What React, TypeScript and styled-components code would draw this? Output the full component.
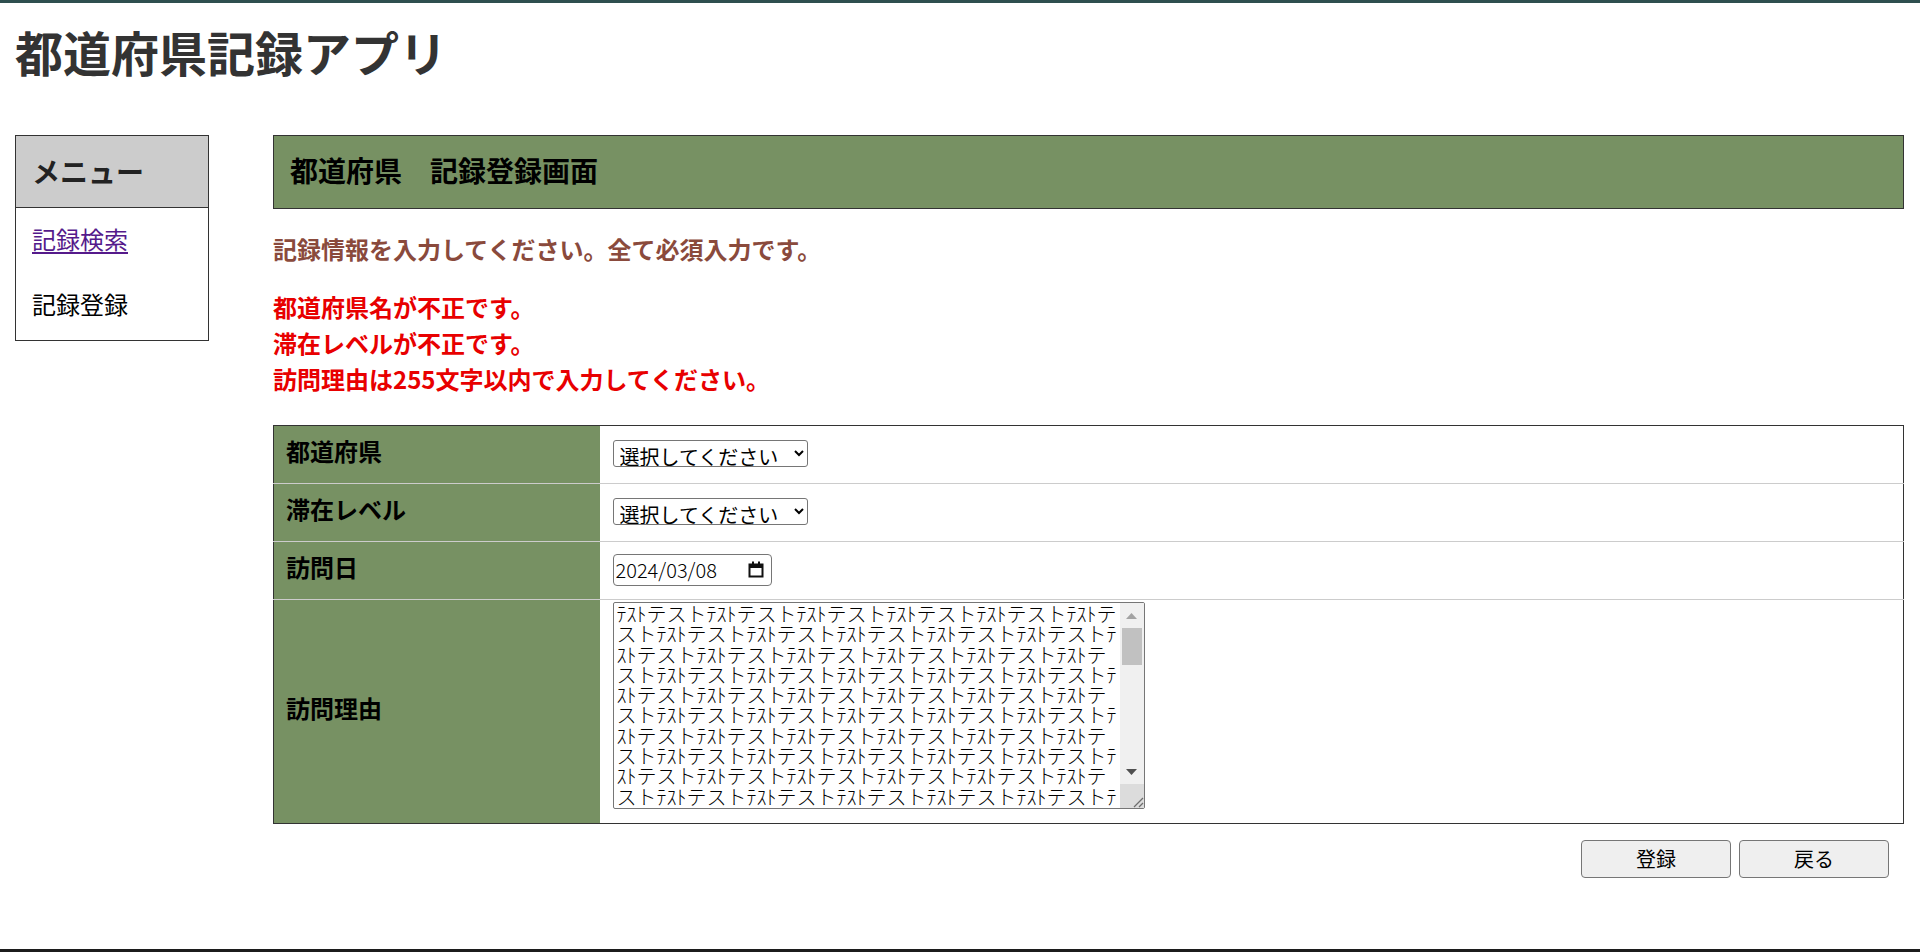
import React from "react";
import styled, { createGlobalStyle } from "styled-components";

const GlobalStyle = createGlobalStyle`
  html, body { margin: 0; padding: 0; background: #fff; }
  body {
    font-family: "Noto Sans CJK JP", "Noto Sans", sans-serif;
    color: #000;
  }
  * { box-sizing: border-box; }
`;

const GREEN = "#779163";

const Page = styled.div`
  display: grid;
  grid-template-rows: auto 1fr auto;
  height: 100vh;
  border-top: 3px solid #2f4f4f;
`;

const Header = styled.header`
  padding: 13px 15px 0;
`;

const Title = styled.h1`
  margin: 0;
  font-size: 48px;
  line-height: 70px;
  font-weight: 700;
  color: #333;
`;

const Body = styled.div`
  display: flex;
  align-items: flex-start;
  gap: 64px;
  padding: 49px 16px 0 15px;
`;

const Sidebar = styled.nav`
  width: 194px;
  flex: none;
  border: 1px solid #333;
`;

const SideHead = styled.h3`
  margin: 0;
  height: 72px;
  display: flex;
  align-items: center;
  padding: 0 0 2px 16px;
  background: #ccc;
  border-bottom: 1px solid #333;
  font-size: 28px;
  font-weight: 700;
  color: #222;
`;

const MenuList = styled.ul`
  list-style: none;
  margin: 0;
  padding: 13px 16px 18px;
  display: flex;
  flex-direction: column;
  gap: 29px;
`;

const MenuItem = styled.li`
  font-size: 24px;
  line-height: 36px;
  color: #000;
`;

const MenuLink = styled.a`
  color: #551a8b;
  text-decoration: underline;
  text-underline-offset: 3px;
`;

const Main = styled.main`
  flex: 1;
  min-width: 0;
`;

const PageHead = styled.h3`
  margin: 0;
  height: 74px;
  display: flex;
  align-items: center;
  padding: 0 0 4px 16px;
  background: ${GREEN};
  border: 1px solid #333;
  font-size: 28px;
  font-weight: 700;
  color: #000;
`;

const Notice = styled.p`
  margin: 22px 0 0;
  font-size: 24px;
  line-height: 36px;
  font-weight: 700;
  color: #8a4a3c;
`;

const Errors = styled.ul`
  list-style: none;
  margin: 22px 0 0;
  padding: 0;
`;

const ErrorItem = styled.li`
  font-size: 24px;
  line-height: 36px;
  font-weight: 700;
  color: #e80000;
`;

const FormTable = styled.table`
  width: 100%;
  margin-top: 28px;
  border-collapse: collapse;
  border: 1px solid #333;
`;

const Row = styled.tr<{ $h: number }>`
  height: ${(p) => p.$h}px;
  border-top: 1px solid #ccc;
  &:first-child { border-top: none; }
`;

const Label = styled.th`
  width: 20%;
  background: ${GREEN};
  text-align: left;
  padding: 0 12px 9px;
  font-size: 24px;
  font-weight: 700;
  vertical-align: middle;
`;

const Cell = styled.td<{ $top?: boolean }>`
  padding: ${(p) => (p.$top ? "2px 13px 0" : "0 13px 2px")};
  vertical-align: ${(p) => (p.$top ? "top" : "middle")};
`;

const Select = styled.select`
  display: block;
  width: 195px;
  height: 27px;
  padding: 0 2px;
  font-family: "Noto Sans CJK JP", sans-serif;
  font-size: 20px;
  line-height: 24px;
  color: #000;
  background: #fff;
  border: 1px solid #767676;
  border-radius: 3px;
`;

const DateBox = styled.label`
  display: flex;
  align-items: center;
  width: 159px;
  height: 32px;
  padding: 0 7px 0 2px;
  border: 1px solid #767676;
  border-radius: 4px;
  background: #fff;
`;

const DateText = styled.input`
  flex: 1;
  min-width: 0;
  border: none;
  outline: none;
  padding: 0;
  font-family: "Noto Sans CJK JP", sans-serif;
  font-size: 20px;
  font-weight: 300;
  color: #000;
  background: transparent;
`;

const AreaBox = styled.div`
  display: flex;
  width: 532px;
  height: 207px;
  border: 1px solid #767676;
  border-radius: 2px;
  background: #fff;
  overflow: hidden;
`;

const Area = styled.textarea`
  flex: 1;
  min-width: 0;
  border: none;
  outline: none;
  resize: none;
  overflow: hidden;
  padding: 1px 2px 0 3px;
  font-family: "Noto Sans CJK JP", monospace;
  font-size: 20px;
  line-height: 20.3px;
  font-weight: 300;
  color: #000;
  background: transparent;
`;

const ScrollBar = styled.div`
  width: 24px;
  flex: none;
  display: flex;
  flex-direction: column;
  background: #f0f0f0;
`;

const ScrollButton = styled.div`
  height: 25px;
  display: flex;
  align-items: center;
  justify-content: center;
`;

const Thumb = styled.div`
  height: 37px;
  margin: 0 2px;
  background: #c1c1c1;
`;

const Track = styled.div`
  flex: 1;
`;

const Corner = styled.div`
  height: 24px;
  background: #dcdcdc;
  display: flex;
  align-items: flex-end;
  justify-content: flex-end;
`;

const Actions = styled.div`
  display: flex;
  justify-content: flex-end;
  gap: 8px;
  margin-top: 16px;
  padding-right: 15px;
`;

const Button = styled.button`
  width: 150px;
  height: 38px;
  font-family: "Noto Sans CJK JP", sans-serif;
  font-size: 20px;
  color: #000;
  background: #efefef;
  border: 1px solid #767676;
  border-radius: 4px;
  padding: 0 0 2px;
`;

const Footer = styled.footer`
  border-top: 3px solid #1c1c1c;
`;

const CalendarIcon = () => (
  <svg width="16" height="17" viewBox="0 0 16 17" aria-hidden="true">
    <rect x="1.5" y="3.5" width="13" height="12" fill="none" stroke="#111" strokeWidth="2" />
    <rect x="1" y="3" width="14" height="4" fill="#111" />
    <rect x="4" y="0.5" width="2" height="3" fill="#111" />
    <rect x="10" y="0.5" width="2" height="3" fill="#111" />
  </svg>
);

const Arrow = ({ up, color }: { up?: boolean; color: string }) => (
  <svg width="11" height="6" viewBox="0 0 11 6" aria-hidden="true">
    <polygon points={up ? "0,6 11,6 5.5,0" : "0,0 11,0 5.5,6"} fill={color} />
  </svg>
);

const Grip = () => (
  <svg width="12" height="12" viewBox="0 0 12 12" aria-hidden="true">
    <line x1="11" y1="2" x2="2" y2="11" stroke="#6d6d6d" strokeWidth="1.2" />
    <line x1="11" y1="7" x2="7" y2="11" stroke="#6d6d6d" strokeWidth="1.2" />
  </svg>
);

const reason = "ﾃｽﾄテスト".repeat(150);

export default function App() {
  return (
    <>
      <GlobalStyle />
      <Page>
        <Header>
          <Title>都道府県記録アプリ</Title>
        </Header>
        <Body>
          <Sidebar>
            <SideHead>メニュー</SideHead>
            <MenuList>
              <MenuItem>
                <MenuLink href="#">記録検索</MenuLink>
              </MenuItem>
              <MenuItem>記録登録</MenuItem>
            </MenuList>
          </Sidebar>
          <Main>
            <PageHead>都道府県　記録登録画面</PageHead>
            <Notice>記録情報を入力してください。全て必須入力です。</Notice>
            <Errors>
              <ErrorItem>都道府県名が不正です。</ErrorItem>
              <ErrorItem>滞在レベルが不正です。</ErrorItem>
              <ErrorItem>訪問理由は255文字以内で入力してください。</ErrorItem>
            </Errors>
            <FormTable>
              <tbody>
                <Row $h={58}>
                  <Label>都道府県</Label>
                  <Cell>
                    <Select defaultValue="">
                      <option value="">選択してください</option>
                    </Select>
                  </Cell>
                </Row>
                <Row $h={58}>
                  <Label>滞在レベル</Label>
                  <Cell>
                    <Select defaultValue="">
                      <option value="">選択してください</option>
                    </Select>
                  </Cell>
                </Row>
                <Row $h={58}>
                  <Label>訪問日</Label>
                  <Cell>
                    <DateBox>
                      <DateText type="text" defaultValue="2024/03/08" />
                      <CalendarIcon />
                    </DateBox>
                  </Cell>
                </Row>
                <Row $h={224}>
                  <Label>訪問理由</Label>
                  <Cell $top>
                    <AreaBox>
                      <Area defaultValue={reason} />
                      <ScrollBar>
                        <ScrollButton>
                          <Arrow up color="#a3a3a3" />
                        </ScrollButton>
                        <Thumb />
                        <Track />
                        <ScrollButton>
                          <Arrow color="#505050" />
                        </ScrollButton>
                        <Corner>
                          <Grip />
                        </Corner>
                      </ScrollBar>
                    </AreaBox>
                  </Cell>
                </Row>
              </tbody>
            </FormTable>
            <Actions>
              <Button type="button">登録</Button>
              <Button type="button">戻る</Button>
            </Actions>
          </Main>
        </Body>
        <Footer />
      </Page>
    </>
  );
}
